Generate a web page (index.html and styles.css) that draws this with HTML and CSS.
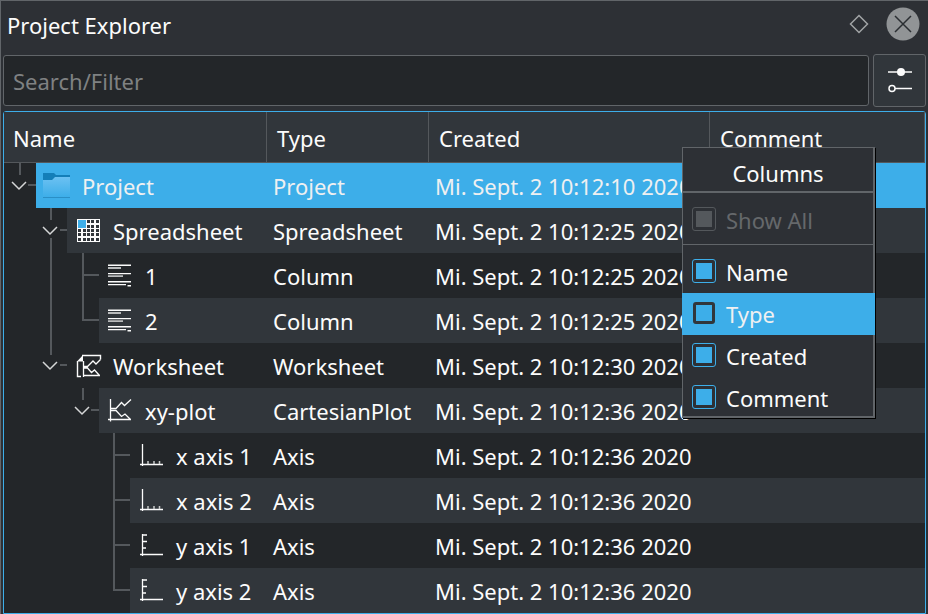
FILE: index.html
```html
<!DOCTYPE html>
<html lang="en">
<head>
<meta charset="utf-8">
<title>Project Explorer</title>
<link rel="stylesheet" href="styles.css">
</head>
<body>
<svg class="defs" aria-hidden="true">
  <defs>
    <linearGradient id="folder-front" x1="0" y1="0" x2="0" y2="1">
      <stop offset="0" stop-color="#6cc1f2"/>
      <stop offset="1" stop-color="#3daee9"/>
    </linearGradient>
    <symbol id="icon-folder" viewBox="0 0 32 32">
      <path d="M2 4h11l2 2h14v7H2z" fill="#147eb8"/>
      <path d="M2 11h9l3-3h15v20H2z" fill="url(#folder-front)"/>
      <path d="M2 28h27v1H2z" fill="#2a8fc6"/>
    </symbol>
    <symbol id="icon-spreadsheet" viewBox="0 0 32 32">
      <path d="M5 5h23v23H5z" fill="#fcfcfc"/>
      <path d="M6 6h8v8H6z" fill="#3daee9"/>
      <path d="M15 6h3v3h-3zM19 6h3v3h-3zM24 6h3v3h-3zM15 11h3v3h-3zM19 11h3v3h-3zM24 11h3v3h-3zM6 15h3v3H6zM11 15h3v3h-3zM15 15h3v3h-3zM19 15h3v3h-3zM24 15h3v3h-3zM6 19h3v3H6zM11 19h3v3h-3zM15 19h3v3h-3zM19 19h3v3h-3zM24 19h3v3h-3zM6 24h3v3H6zM11 24h3v3h-3zM15 24h3v3h-3zM19 24h3v3h-3zM24 24h3v3h-3z" fill="#31363b"/>
    </symbol>
    <symbol id="icon-column" viewBox="0 0 32 32">
      <path d="M4 5.500h23v1.500H4zM4 14h23v1.300H4zM4 22h23v1.500H4zM4 25h18v1.200H4zM23.500 26h3.500v1.500h-3.500z" fill="#fcfcfc"/>
      <path d="M4 8h13v2H4zM4 16.300h15v1.700H4z" fill="#b9bbbc"/>
    </symbol>
    <symbol id="icon-worksheet" viewBox="0 0 32 32">
      <path d="M9 27.500H5.500V12M10 6.500h18.500v4" fill="none" stroke="#fcfcfc" stroke-width="1.400"/>
      <path d="M5 12.500L11 6v6.500z" fill="#fcfcfc"/>
      <path d="M11.500 12v16M11 26.500h17M12 17.500h3.500l5.500-5.500 3 3 4.500-4.500M12 19h3.500l4 4.500 3-2.500 5 5.500" fill="none" stroke="#fcfcfc" stroke-width="1.300"/>
    </symbol>
    <symbol id="icon-plot" viewBox="0 0 32 32">
      <path d="M6.500 5v22.500M4 25.500h23M6.500 14.500H12l5.500-6 3 3L27 5.500M6.500 16.500H12l5.500 6 3.500-2.500 5.500 5.500" fill="none" stroke="#fcfcfc" stroke-width="1.300"/>
    </symbol>
    <symbol id="icon-axis-x" viewBox="0 0 32 32">
      <path d="M7.500 5v22M5 25.500h23" fill="none" stroke="#fcfcfc" stroke-width="1.300"/>
      <path d="M13 22v3M19 22v3M24.500 22v3" fill="none" stroke="#c8caca" stroke-width="1.500"/>
    </symbol>
    <symbol id="icon-axis-y" viewBox="0 0 32 32">
      <path d="M7.500 5v22M5 25.500h23M8 6h4M8 12.500h4M8 19h3" fill="none" stroke="#fcfcfc" stroke-width="1.300"/>
    </symbol>
  </defs>
</svg>

<main class="dock">
  <header class="titlebar">
    <h1 class="title">Project Explorer</h1>
    <button class="tool" type="button" aria-label="Float panel">
      <svg width="20" height="20" viewBox="0 0 20 20"><path d="M10 1.500l8.500 8.500-8.500 8.500L1.500 10z" fill="none" stroke="#a1a4a6" stroke-width="1.500"/></svg>
    </button>
    <button class="tool" type="button" aria-label="Close panel">
      <svg width="34" height="34" viewBox="0 0 34 34"><circle cx="17" cy="17" r="16.500" fill="#919496"/><path d="M9 9l16 16M25 9L9 25" stroke="#2a2e32" stroke-width="1.500"/></svg>
    </button>
  </header>

  <div class="filter">
    <input class="search" type="text" placeholder="Search/Filter" aria-label="Search/Filter">
    <button class="options" type="button" aria-label="Filter options">
      <svg width="26" height="28" viewBox="0 0 26 28"><path d="M1 5h24M8 21.500h17" stroke="#fcfcfc" stroke-width="1.500"/><circle cx="14" cy="5" r="4" fill="#fcfcfc"/><circle cx="5" cy="21.500" r="3" fill="none" stroke="#fcfcfc" stroke-width="1.500"/></svg>
    </button>
  </div>

  <div class="tree">
    <table>
      <colgroup><col class="col-name"><col class="col-type"><col class="col-created"><col></colgroup>
      <thead>
        <tr><th>Name</th><th>Type</th><th>Created</th><th>Comment</th></tr>
      </thead>
      <tbody>
        <tr class="selected">
          <td><div class="node"><svg class="guide" width="32" height="45"><path d="M16 0v12M24 22h8"/><path class="chevron" d="M8 19l7 7 7-7"/></svg><span class="item"><svg class="icon"><use href="#icon-folder"/></svg>Project</span></div></td>
          <td>Project</td><td>Mi. Sept. 2 10:12:10 2020</td><td></td>
        </tr>
        <tr>
          <td><div class="node"><svg class="guide" width="63" height="45"><path d="M47 0v12M47 30v15M56 22h7"/><path class="chevron" d="M39 19l7 7 7-7"/></svg><span class="item"><svg class="icon"><use href="#icon-spreadsheet"/></svg>Spreadsheet</span></div></td>
          <td>Spreadsheet</td><td>Mi. Sept. 2 10:12:25 2020</td><td></td>
        </tr>
        <tr>
          <td><div class="node"><svg class="guide" width="95" height="45"><path d="M47 0v45M79 0v45M79 22h16"/></svg><span class="item"><svg class="icon"><use href="#icon-column"/></svg>1</span></div></td>
          <td>Column</td><td>Mi. Sept. 2 10:12:25 2020</td><td></td>
        </tr>
        <tr>
          <td><div class="node"><svg class="guide" width="95" height="45"><path d="M47 0v45M79 0v22h16"/></svg><span class="item"><svg class="icon"><use href="#icon-column"/></svg>2</span></div></td>
          <td>Column</td><td>Mi. Sept. 2 10:12:25 2020</td><td></td>
        </tr>
        <tr>
          <td><div class="node"><svg class="guide" width="63" height="45"><path d="M47 0v12M56 22h7"/><path class="chevron" d="M39 19l7 7 7-7"/></svg><span class="item"><svg class="icon"><use href="#icon-worksheet"/></svg>Worksheet</span></div></td>
          <td>Worksheet</td><td>Mi. Sept. 2 10:12:30 2020</td><td></td>
        </tr>
        <tr>
          <td><div class="node"><svg class="guide" width="95" height="45"><path d="M79 0v12M87 22h8"/><path class="chevron" d="M71 19l7 7 7-7"/></svg><span class="item"><svg class="icon"><use href="#icon-plot"/></svg>xy-plot</span></div></td>
          <td>CartesianPlot</td><td>Mi. Sept. 2 10:12:36 2020</td><td></td>
        </tr>
        <tr>
          <td><div class="node"><svg class="guide" width="126" height="45"><path d="M110 0v45M110 22h16"/></svg><span class="item"><svg class="icon"><use href="#icon-axis-x"/></svg>x axis 1</span></div></td>
          <td>Axis</td><td>Mi. Sept. 2 10:12:36 2020</td><td></td>
        </tr>
        <tr>
          <td><div class="node"><svg class="guide" width="126" height="45"><path d="M110 0v45M110 22h16"/></svg><span class="item"><svg class="icon"><use href="#icon-axis-x"/></svg>x axis 2</span></div></td>
          <td>Axis</td><td>Mi. Sept. 2 10:12:36 2020</td><td></td>
        </tr>
        <tr>
          <td><div class="node"><svg class="guide" width="126" height="45"><path d="M110 0v45M110 22h16"/></svg><span class="item"><svg class="icon"><use href="#icon-axis-y"/></svg>y axis 1</span></div></td>
          <td>Axis</td><td>Mi. Sept. 2 10:12:36 2020</td><td></td>
        </tr>
        <tr>
          <td><div class="node"><svg class="guide" width="126" height="45"><path d="M110 0v22h16"/></svg><span class="item"><svg class="icon"><use href="#icon-axis-y"/></svg>y axis 2</span></div></td>
          <td>Axis</td><td>Mi. Sept. 2 10:12:36 2020</td><td></td>
        </tr>
      </tbody>
    </table>

    <div class="menu">
      <h2 class="menu-title">Columns</h2>
      <div class="menu-group">
        <label class="option disabled"><input type="checkbox" checked disabled>Show All</label>
      </div>
      <div class="menu-group">
        <label class="option"><input type="checkbox" checked>Name</label>
        <label class="option active"><input type="checkbox" checked>Type</label>
        <label class="option"><input type="checkbox" checked>Created</label>
        <label class="option"><input type="checkbox" checked>Comment</label>
      </div>
    </div>
  </div>
</main>
</body>
</html>
```
FILE: styles.css
```css
* { box-sizing: border-box; }

:root {
  --window: #2d3035;
  --base: #232629;
  --alt: #31363b;
  --line: #616569;
  --accent: #3daee9;
  --text: #fcfcfc;
}

body {
  margin: 0;
  background: var(--window);
  color: var(--text);
  font: 22px/32px "Noto Sans", sans-serif;
  overflow: hidden;
}

button, input { font: inherit; color: inherit; margin: 0; }
.defs { position: absolute; width: 0; height: 0; }

.dock {
  min-height: 100vh;
  border: solid var(--line);
  border-width: 1px 0 0 1px;
  padding: 0 2px;
}

.titlebar {
  display: flex;
  align-items: center;
  gap: 17px;
  height: 53px;
  padding: 0 6px 8px 4px;
}
.title { flex: 1; margin: 0; padding-top: 2px; font-size: 22px; font-weight: 400; }
.tool { display: flex; padding: 0; border: 0; background: none; }

.filter { display: flex; align-items: center; gap: 4px; height: 53px; }
.search {
  flex: 1;
  min-width: 0;
  height: 51px;
  padding: 0 9px;
  border: 1px solid var(--line);
  border-radius: 3px;
  background: var(--base);
  outline: 0;
}
.search::placeholder { color: #7f8182; opacity: 1; }
.options {
  display: grid;
  place-items: center;
  width: 53px;
  height: 53px;
  padding: 0;
  border: 1px solid var(--line);
  border-radius: 3px;
  background: var(--alt);
}

.tree {
  position: relative;
  margin-top: 4px;
  border: 1px solid var(--accent);
  border-radius: 3px 3px 0 0;
  background: var(--base);
}
table { width: 100%; table-layout: fixed; border-collapse: separate; border-spacing: 0; }
.col-name { width: 263px; }
.col-type { width: 162px; }
.col-created { width: 281px; }
th {
  height: 51px;
  padding: 1px 10px 0;
  border: solid #54585c;
  border-width: 0 1px 1px 0;
  background: var(--alt);
  font-weight: 400;
  text-align: left;
}
th:first-child { padding-left: 9px; }
td { height: 45px; padding: 1px 0 0 6px; white-space: nowrap; }
td:first-child { padding: 0; }

.node { display: flex; height: 45px; }
.guide { flex: none; fill: none; stroke: #54585c; stroke-width: 2px; }
.guide .chevron { stroke: #d5d6d7; stroke-width: 1.500px; }
.item { flex: 1; display: flex; align-items: center; gap: 9px; padding: 1px 0 0 5px; }
.icon { width: 32px; height: 32px; margin-top: -2px; }

tbody tr:nth-child(even) td:not(:first-child),
tbody tr:nth-child(even) .item { background: var(--alt); }
tbody .selected td:not(:first-child),
tbody .selected .item { background: var(--accent); color: #eff0f1; }

.menu {
  position: absolute;
  top: 35px;
  left: 678px;
  width: 193px;
  border: solid var(--line);
  border-width: 1px 2px 2px 1px;
  background: var(--window);
  box-shadow: 1px 1px #000;
}
.menu-title {
  margin: 0;
  padding: 9px 0 2px;
  border-bottom: 2px solid var(--line);
  font-size: 22px;
  font-weight: 400;
  text-align: center;
}
.menu-group { padding-top: 6px; }
.menu-group + .menu-group { margin-top: 6px; border-top: 1px solid var(--line); }
.option { display: flex; gap: 10px; height: 42px; padding: 5px 0 0 9px; }
.option:last-child { height: 39px; }
.option.disabled { color: #65686b; }
.option.active { margin: 0 -2px 0 -1px; padding-left: 10px; background: var(--accent); color: #eff0f1; }
.option input {
  flex: none;
  appearance: none;
  width: 24px;
  height: 24px;
  margin-top: 3px;
  padding: 3px;
  border: 1px solid var(--accent);
  border-radius: 3px;
}
.option input:checked { background: var(--accent) content-box; }
.option input:disabled { border-color: #54585c; background-color: #54585c; }
.option.active input { width: 22px; height: 22px; margin: 4px 1px 0; border: 3px solid var(--alt); padding: 0; }
```
